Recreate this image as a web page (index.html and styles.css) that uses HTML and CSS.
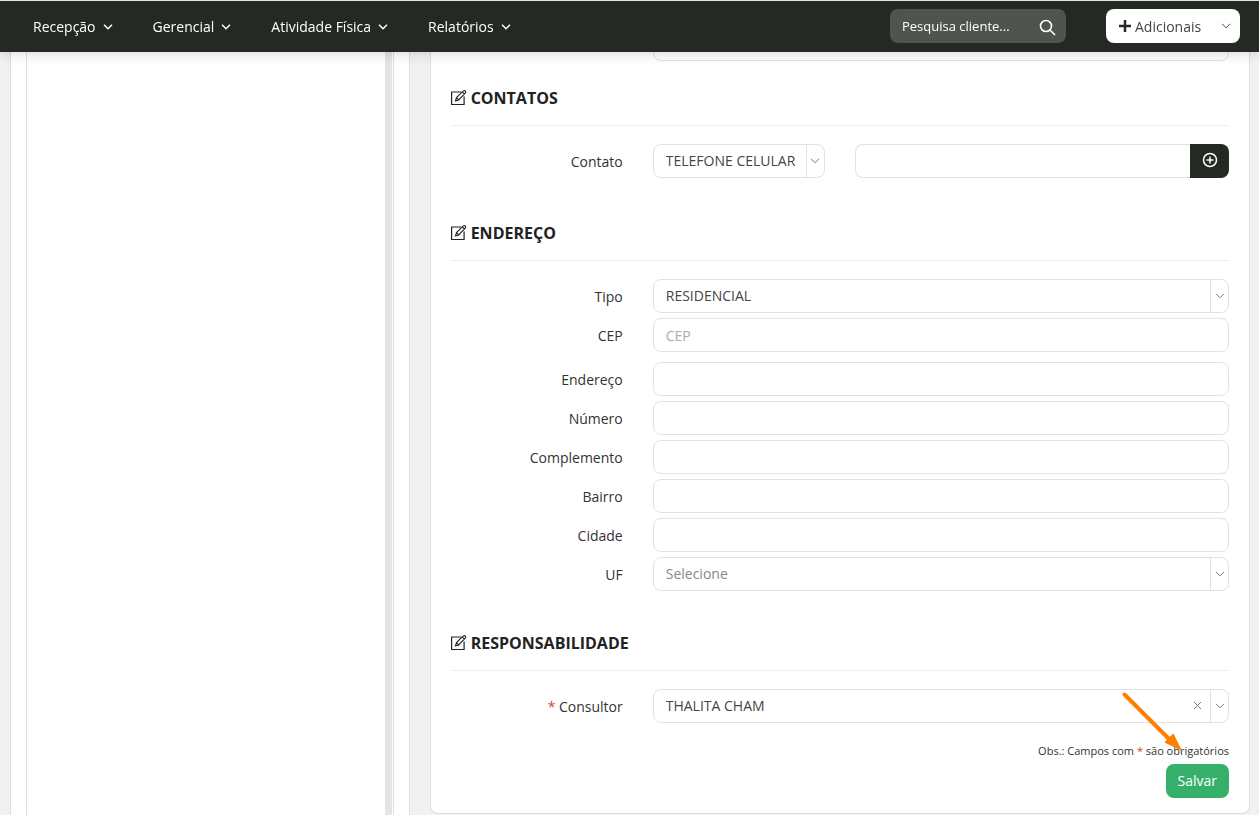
FILE: index.html
```html
<!DOCTYPE html>
<html lang="pt-BR">
<head>
    <meta charset="UTF-8">
    <meta name="viewport" content="width=device-width, initial-scale=1.0">
    <title>Cadastro de cliente</title>
    <link rel="stylesheet" href="styles.css">
</head>
<body>
    <!-- Shared icons -->
    <svg class="icon-defs" aria-hidden="true">
        <symbol id="icon-chevron" viewBox="0 0 10 6">
            <path d="M1 .8l4 4 4-4" fill="none" stroke="currentColor"/>
        </symbol>
        <symbol id="icon-edit" viewBox="0 0 16 16">
            <path d="M10 2H.6v12.500h12.500V6.500" fill="none" stroke="currentColor" stroke-width="1.2"/>
            <path d="M4.500 11l1-3.400L12.300.9q1-.7 1.900.1t.2 2L7.700 9.900zM5.500 7.600l2.200 2.200M11.300 2l2.200 2.200" fill="none" stroke="currentColor" stroke-width="1.100"/>
        </symbol>
    </svg>

    <header class="topbar">
        <nav class="menu">
            <a href="#">Recepção <svg class="menu-arrow"><use href="#icon-chevron"/></svg></a>
            <a href="#">Gerencial <svg class="menu-arrow"><use href="#icon-chevron"/></svg></a>
            <a href="#">Atividade Física <svg class="menu-arrow"><use href="#icon-chevron"/></svg></a>
            <a href="#">Relatórios <svg class="menu-arrow"><use href="#icon-chevron"/></svg></a>
        </nav>
        <div class="search">
            <input type="text" placeholder="Pesquisa cliente..." aria-label="Pesquisa cliente">
            <button type="button" class="search-btn" aria-label="Pesquisar">
                <svg viewBox="0 0 18 18"><circle cx="8" cy="7" r="5.500"/><path d="M12 11l5 5"/></svg>
            </button>
        </div>
        <button type="button" class="extras-btn">
            <svg class="plus" viewBox="0 0 12 12"><path d="M6 0v12M0 6h12"/></svg>
            <span>Adicionais</span>
            <svg class="extras-arrow"><use href="#icon-chevron"/></svg>
        </button>
    </header>

    <main class="page">
        <aside class="col-side">
            <div class="side-panel">
                <div class="side-list"></div>
            </div>
        </aside>

        <div class="col-main">
            <form class="panel">
                <div class="field">
                    <input type="text" class="control wide" aria-label="Observação">
                </div>

                <section class="section contacts">
                    <h2><svg><use href="#icon-edit"/></svg>CONTATOS</h2>
                    <div class="field">
                        <label for="contactType">Contato</label>
                        <div class="select">
                            <select class="control" id="contactType"><option>TELEFONE CELULAR</option></select>
                            <span class="select-arrow"><svg><use href="#icon-chevron"/></svg></span>
                        </div>
                        <div class="input-group">
                            <input type="text" class="control" aria-label="Número do contato">
                            <button type="button" class="add-btn" aria-label="Adicionar contato">
                                <svg viewBox="0 0 16 16"><circle cx="8" cy="8" r="6.500"/><path d="M8 4.500v7M4.500 8h7"/></svg>
                            </button>
                        </div>
                    </div>
                </section>

                <section class="section address">
                    <h2><svg><use href="#icon-edit"/></svg>ENDEREÇO</h2>
                    <div class="field">
                        <label for="addressType">Tipo</label>
                        <div class="select wide">
                            <select class="control" id="addressType"><option>RESIDENCIAL</option></select>
                            <span class="select-arrow"><svg><use href="#icon-chevron"/></svg></span>
                        </div>
                    </div>
                    <div class="field field-cep">
                        <label for="cep">CEP</label>
                        <input type="text" class="control wide" id="cep" placeholder="CEP">
                    </div>
                    <div class="field">
                        <label for="street">Endereço</label>
                        <input type="text" class="control wide" id="street">
                    </div>
                    <div class="field">
                        <label for="number">Número</label>
                        <input type="text" class="control wide" id="number">
                    </div>
                    <div class="field">
                        <label for="complement">Complemento</label>
                        <input type="text" class="control wide" id="complement">
                    </div>
                    <div class="field">
                        <label for="district">Bairro</label>
                        <input type="text" class="control wide" id="district">
                    </div>
                    <div class="field">
                        <label for="city">Cidade</label>
                        <input type="text" class="control wide" id="city">
                    </div>
                    <div class="field">
                        <label for="state">UF</label>
                        <div class="select wide">
                            <select class="control empty" id="state"><option>Selecione</option></select>
                            <span class="select-arrow"><svg><use href="#icon-chevron"/></svg></span>
                        </div>
                    </div>
                </section>

                <section class="section">
                    <h2><svg><use href="#icon-edit"/></svg>RESPONSABILIDADE</h2>
                    <div class="field">
                        <label for="consultant"><span class="required">*</span> Consultor</label>
                        <div class="select wide">
                            <select class="control" id="consultant"><option>THALITA CHAM</option></select>
                            <button type="button" class="clear-btn" aria-label="Limpar">
                                <svg viewBox="0 0 9 9"><path d="M1 1l7 7M8 1l-7 7"/></svg>
                            </button>
                            <span class="select-arrow"><svg><use href="#icon-chevron"/></svg></span>
                        </div>
                    </div>
                </section>

                <div class="form-footer">
                    <p>Obs.: Campos com <span class="required">*</span> são obrigatórios</p>
                    <button type="submit" class="save-btn">Salvar</button>
                    <svg class="pointer" viewBox="0 0 60 60">
                        <path d="M2.500 2.500L46 46" stroke="#ff8000" stroke-width="4" stroke-linecap="round"/>
                        <path d="M60 59L42.500 50.500L46 46L51.500 41.500z" fill="#ff8000"/>
                    </svg>
                </div>
            </form>
        </div>
    </main>
</body>
</html>
```
FILE: styles.css
```css
* {
    box-sizing: border-box;
}

body {
    margin: 0;
    background-color: #f1f1f1;
    font-family: "Open Sans", sans-serif;
    font-size: 14px;
    line-height: 20px;
    color: #333;
}

input,
select,
button {
    font-family: inherit;
    font-size: 14px;
    margin: 0;
}

button {
    padding: 0;
    border: none;
    cursor: pointer;
}

.icon-defs {
    display: none;
}

/* Top bar */
.topbar {
    position: fixed;
    top: 0;
    left: 0;
    right: 0;
    z-index: 10;
    display: flex;
    align-items: center;
    height: 52px;
    padding: 0 19px 1px 33px;
    background-color: #252924;
    border-top: 1px solid #dfe8df;
    box-shadow: 0 2px 12px rgba(0, 0, 0, 0.15);
}

.menu {
    display: flex;
    gap: 40px;
    margin-right: auto;
    padding-top: 1px;
}

.menu a {
    display: flex;
    align-items: center;
    gap: 7px;
    color: #fff;
    font-weight: 500;
    text-decoration: none;
}

.menu-arrow {
    width: 10px;
    height: 6px;
    stroke-width: 1.5;
}

.search {
    display: flex;
    align-items: center;
    width: 176px;
    height: 34px;
    margin-right: 40px;
    padding: 0 10px 0 12px;
    background-color: #50544f;
    border-radius: 8px;
}

.search input {
    flex: 1;
    min-width: 0;
    padding: 0;
    border: none;
    outline: none;
    background: none;
    color: #fff;
    font-size: 13px;
    font-weight: 500;
}

.search input::placeholder {
    color: #fff;
}

.search-btn {
    height: 18px;
    padding-top: 2px;
    background: none;
}

.search-btn svg {
    display: block;
    width: 18px;
    height: 18px;
    fill: none;
    stroke: #fff;
    stroke-width: 1.6;
}

.extras-btn {
    display: flex;
    align-items: center;
    gap: 4px;
    width: 134px;
    height: 34px;
    padding: 0 9px 0 13px;
    background-color: #fff;
    border-radius: 8px;
    color: #444;
}

.plus {
    width: 12px;
    height: 12px;
    stroke: #252924;
    stroke-width: 2.5;
}

.extras-arrow {
    width: 10px;
    height: 6px;
    margin-left: auto;
}

/* Columns */
.page {
    display: flex;
}

.col-side {
    display: flex;
    width: 33.3333%;
    padding: 0 10px;
}

.side-panel {
    display: flex;
    flex: 1;
    padding: 0 15px;
    background-color: #fff;
    border: 1px solid #ddd;
    border-width: 0 1px;
}

.side-list {
    flex: 1;
    border: 1px solid #ddd;
    border-width: 0 1px;
    box-shadow: inset -1px 0 #fff, inset -8px 0 #e4e4e4;
}

.col-main {
    flex: 1;
    padding: 0 9px 1px 10px;
}

.panel {
    padding: 27px 20px 15px;
    background-color: #fff;
    border: 1px solid #ddd;
    border-top: none;
    border-radius: 0 0 8px 8px;
}

/* Form */
.section {
    padding-top: 20px;
}

.section.contacts {
    padding-bottom: 18px;
}

.section.address {
    padding-bottom: 15px;
}

.section h2 {
    display: flex;
    align-items: center;
    gap: 4px;
    margin: 0 0 18px;
    padding-bottom: 15px;
    border-bottom: 1px solid #eee;
    color: #222;
    font-size: 16px;
    line-height: 24px;
    font-weight: 700;
}

.section h2 svg {
    width: 16px;
    height: 16px;
}

.field {
    display: grid;
    grid-template-columns: repeat(4, 1fr);
    column-gap: 30px;
    margin-bottom: 5px;
}

.field-cep {
    margin-bottom: 10px;
}

.field label {
    padding-top: 8px;
    text-align: right;
}

.control {
    width: 100%;
    height: 34px;
    padding: 0 12px;
    background-color: #fff;
    border: 1px solid #e1e1e1;
    border-radius: 8px;
    color: #444;
    outline: none;
}

.control::placeholder {
    color: #aaa;
}

.control.empty {
    color: #888;
}

.wide {
    grid-column: 2 / 5;
}

.select {
    position: relative;
}

.select .control {
    display: block;
    padding-bottom: 2px;
    appearance: none;
}

.select-arrow {
    position: absolute;
    top: 1px;
    right: 1px;
    bottom: 1px;
    display: flex;
    align-items: center;
    justify-content: center;
    width: 18px;
    border-left: 1px solid #e1e1e1;
    color: #777;
    pointer-events: none;
}

.select-arrow svg {
    width: 10px;
    height: 6px;
}

.clear-btn {
    position: absolute;
    top: 12px;
    right: 27px;
    background: none;
}

.clear-btn svg {
    display: block;
    width: 9px;
    height: 9px;
    stroke: #777;
}

.input-group {
    display: flex;
    grid-column: 3 / 5;
}

.input-group .control {
    flex: 1;
    min-width: 0;
    border-right: none;
    border-radius: 8px 0 0 8px;
}

.add-btn {
    display: flex;
    align-items: center;
    justify-content: center;
    width: 39px;
    height: 34px;
    padding-bottom: 2px;
    background-color: #252924;
    border-radius: 0 8px 8px 0;
}

.add-btn svg {
    width: 16px;
    height: 16px;
    fill: none;
    stroke: #fff;
    stroke-width: 1.5;
}

.required {
    color: #d9402f;
}

/* Footer */
.form-footer {
    position: relative;
    display: flex;
    flex-direction: column;
    align-items: flex-end;
    padding-top: 15px;
}

.form-footer p {
    margin: 0 0 5px;
    font-size: 11px;
    line-height: 16px;
}

.save-btn {
    height: 34px;
    padding: 0 12px 2px;
    background-color: #35b06a;
    border-radius: 8px;
    color: #fff;
}

.pointer {
    position: absolute;
    top: -36px;
    right: 47px;
    width: 60px;
    height: 60px;
    pointer-events: none;
}
```
